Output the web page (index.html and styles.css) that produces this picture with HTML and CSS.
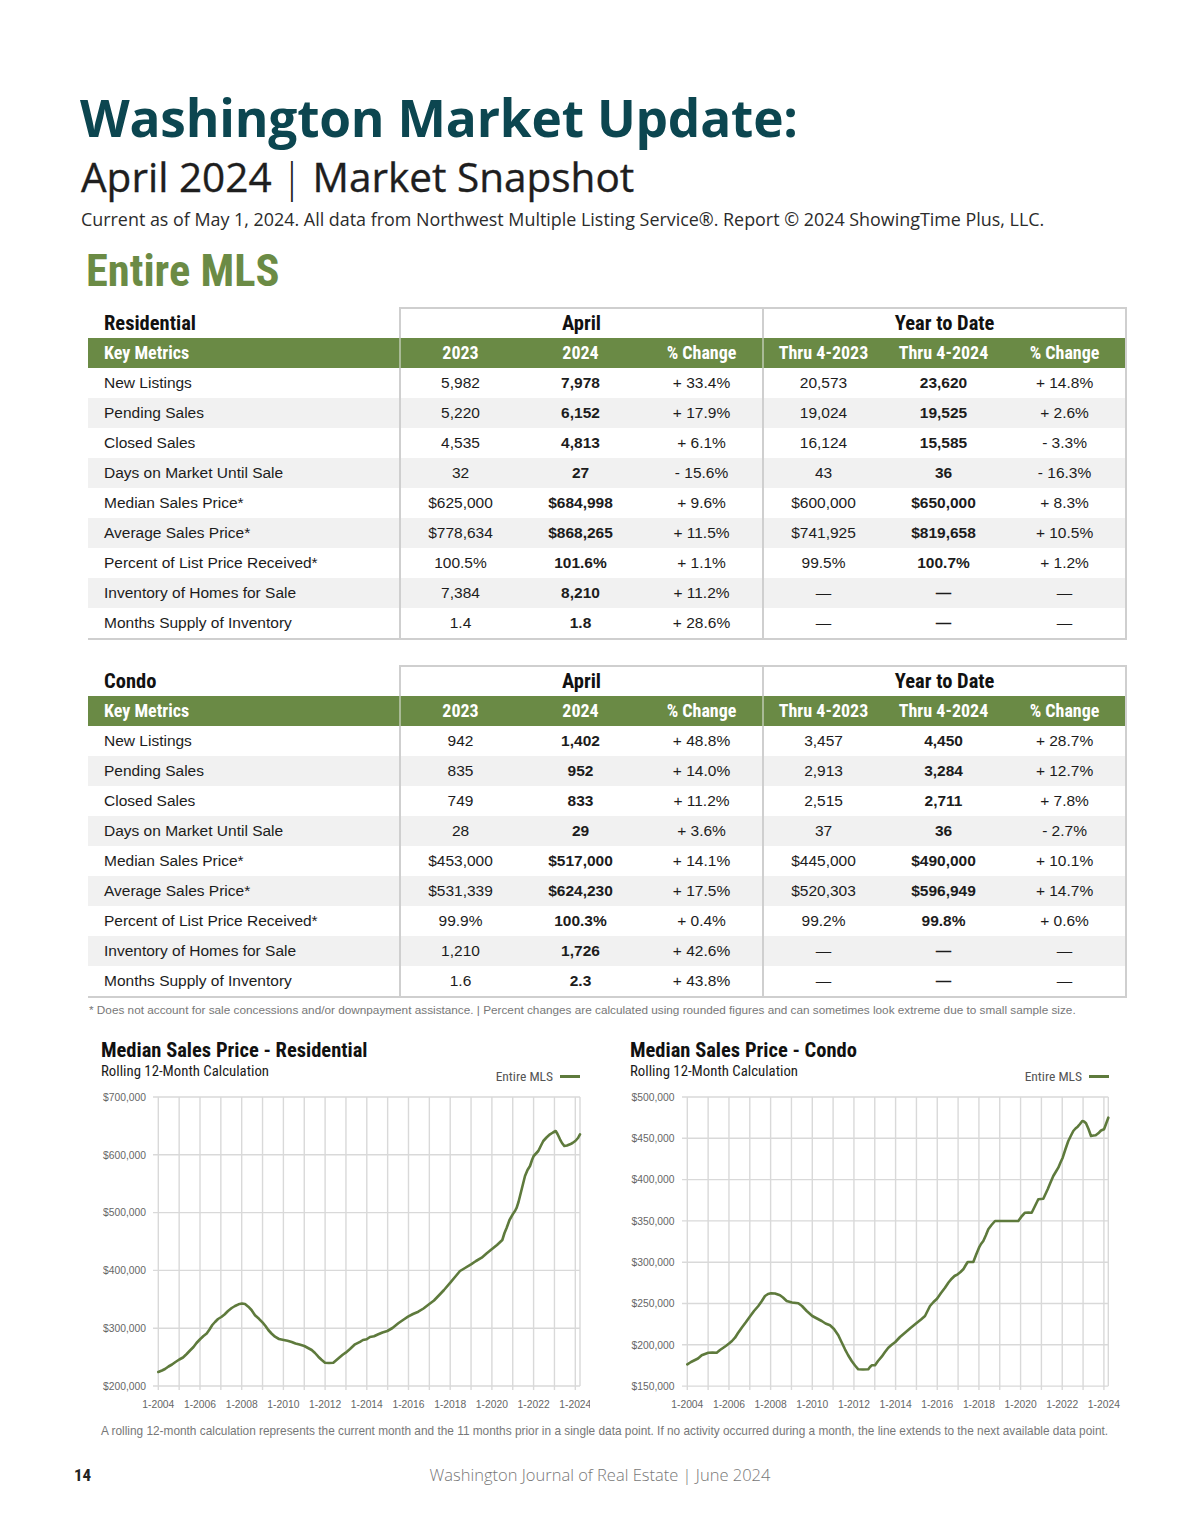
FILE: index.html
```html
<!DOCTYPE html>
<html lang="en">
<head>
<meta charset="utf-8">
<title>Washington Market Update: April 2024</title>
<link rel="stylesheet" href="styles.css">
</head>
<body>
<div class="page">
  <header class="head">
    <h1 class="title">Washington Market Update:</h1>
    <h2 class="subtitle">April 2024 <span class="pipe">|</span> Market Snapshot</h2>
    <p class="current">Current as of May 1, 2024. All data from Northwest Multiple Listing Service®. Report © 2024 ShowingTime Plus, LLC.</p>
  </header>

  <h2 class="section">Entire MLS</h2>

  <table class="metrics">
    <colgroup><col class="c-label"><col class="c-num"><col class="c-num"><col class="c-num"><col class="c-num"><col class="c-num"><col class="c-num"></colgroup>
    <thead>
      <tr class="group">
        <th class="tname">Residential</th>
        <th colspan="3" class="grp">April</th>
        <th colspan="3" class="grp grp-last">Year to Date</th>
      </tr>
      <tr class="hdr">
        <th class="lbl">Key Metrics</th>
        <th class="sep">2023</th><th>2024</th><th>% Change</th>
        <th class="sep">Thru 4-2023</th><th>Thru 4-2024</th><th class="end">% Change</th>
      </tr>
    </thead>
    <tbody>
      <tr><td class="lbl">New Listings</td><td class="sep">5,982</td><td class="b">7,978</td><td>+ 33.4%</td><td class="sep">20,573</td><td class="b">23,620</td><td class="end">+ 14.8%</td></tr>
      <tr><td class="lbl">Pending Sales</td><td class="sep">5,220</td><td class="b">6,152</td><td>+ 17.9%</td><td class="sep">19,024</td><td class="b">19,525</td><td class="end">+ 2.6%</td></tr>
      <tr><td class="lbl">Closed Sales</td><td class="sep">4,535</td><td class="b">4,813</td><td>+ 6.1%</td><td class="sep">16,124</td><td class="b">15,585</td><td class="end">- 3.3%</td></tr>
      <tr><td class="lbl">Days on Market Until Sale</td><td class="sep">32</td><td class="b">27</td><td>- 15.6%</td><td class="sep">43</td><td class="b">36</td><td class="end">- 16.3%</td></tr>
      <tr><td class="lbl">Median Sales Price*</td><td class="sep">$625,000</td><td class="b">$684,998</td><td>+ 9.6%</td><td class="sep">$600,000</td><td class="b">$650,000</td><td class="end">+ 8.3%</td></tr>
      <tr><td class="lbl">Average Sales Price*</td><td class="sep">$778,634</td><td class="b">$868,265</td><td>+ 11.5%</td><td class="sep">$741,925</td><td class="b">$819,658</td><td class="end">+ 10.5%</td></tr>
      <tr><td class="lbl">Percent of List Price Received*</td><td class="sep">100.5%</td><td class="b">101.6%</td><td>+ 1.1%</td><td class="sep">99.5%</td><td class="b">100.7%</td><td class="end">+ 1.2%</td></tr>
      <tr><td class="lbl">Inventory of Homes for Sale</td><td class="sep">7,384</td><td class="b">8,210</td><td>+ 11.2%</td><td class="sep">—</td><td class="b">—</td><td class="end">—</td></tr>
      <tr><td class="lbl">Months Supply of Inventory</td><td class="sep">1.4</td><td class="b">1.8</td><td>+ 28.6%</td><td class="sep">—</td><td class="b">—</td><td class="end">—</td></tr>
    </tbody>
  </table>

  <table class="metrics metrics-2">
    <colgroup><col class="c-label"><col class="c-num"><col class="c-num"><col class="c-num"><col class="c-num"><col class="c-num"><col class="c-num"></colgroup>
    <thead>
      <tr class="group">
        <th class="tname">Condo</th>
        <th colspan="3" class="grp">April</th>
        <th colspan="3" class="grp grp-last">Year to Date</th>
      </tr>
      <tr class="hdr">
        <th class="lbl">Key Metrics</th>
        <th class="sep">2023</th><th>2024</th><th>% Change</th>
        <th class="sep">Thru 4-2023</th><th>Thru 4-2024</th><th class="end">% Change</th>
      </tr>
    </thead>
    <tbody>
      <tr><td class="lbl">New Listings</td><td class="sep">942</td><td class="b">1,402</td><td>+ 48.8%</td><td class="sep">3,457</td><td class="b">4,450</td><td class="end">+ 28.7%</td></tr>
      <tr><td class="lbl">Pending Sales</td><td class="sep">835</td><td class="b">952</td><td>+ 14.0%</td><td class="sep">2,913</td><td class="b">3,284</td><td class="end">+ 12.7%</td></tr>
      <tr><td class="lbl">Closed Sales</td><td class="sep">749</td><td class="b">833</td><td>+ 11.2%</td><td class="sep">2,515</td><td class="b">2,711</td><td class="end">+ 7.8%</td></tr>
      <tr><td class="lbl">Days on Market Until Sale</td><td class="sep">28</td><td class="b">29</td><td>+ 3.6%</td><td class="sep">37</td><td class="b">36</td><td class="end">- 2.7%</td></tr>
      <tr><td class="lbl">Median Sales Price*</td><td class="sep">$453,000</td><td class="b">$517,000</td><td>+ 14.1%</td><td class="sep">$445,000</td><td class="b">$490,000</td><td class="end">+ 10.1%</td></tr>
      <tr><td class="lbl">Average Sales Price*</td><td class="sep">$531,339</td><td class="b">$624,230</td><td>+ 17.5%</td><td class="sep">$520,303</td><td class="b">$596,949</td><td class="end">+ 14.7%</td></tr>
      <tr><td class="lbl">Percent of List Price Received*</td><td class="sep">99.9%</td><td class="b">100.3%</td><td>+ 0.4%</td><td class="sep">99.2%</td><td class="b">99.8%</td><td class="end">+ 0.6%</td></tr>
      <tr><td class="lbl">Inventory of Homes for Sale</td><td class="sep">1,210</td><td class="b">1,726</td><td>+ 42.6%</td><td class="sep">—</td><td class="b">—</td><td class="end">—</td></tr>
      <tr><td class="lbl">Months Supply of Inventory</td><td class="sep">1.6</td><td class="b">2.3</td><td>+ 43.8%</td><td class="sep">—</td><td class="b">—</td><td class="end">—</td></tr>
    </tbody>
  </table>

  <p class="footnote">* Does not account for sale concessions and/or downpayment assistance. | Percent changes are calculated using rounded figures and can sometimes look extreme due to small sample size.</p>

  <section class="charts">
    <figure class="chart chart-left">
      <div class="chart-head">
        <div class="chart-titles">
          <h3 class="chart-title">Median Sales Price - Residential</h3>
          <p class="chart-sub">Rolling 12-Month Calculation</p>
        </div>
        <div class="legend">Entire MLS <span class="legend-line"></span></div>
      </div>
      <svg class="plot" width="495" height="330" viewBox="0 0 495 330">
        <g class="grid">
          <line x1="58" y1="11" x2="485" y2="11"/><line x1="58" y1="68.8" x2="485" y2="68.8"/><line x1="58" y1="126.6" x2="485" y2="126.6"/><line x1="58" y1="184.4" x2="485" y2="184.4"/><line x1="58" y1="242.2" x2="485" y2="242.2"/><line x1="58" y1="300" x2="485" y2="300"/>
          <line x1="63.3" y1="11" x2="63.3" y2="304"/><line x1="84.15" y1="11" x2="84.15" y2="304"/><line x1="105" y1="11" x2="105" y2="304"/><line x1="125.85" y1="11" x2="125.85" y2="304"/><line x1="146.7" y1="11" x2="146.7" y2="304"/><line x1="167.55" y1="11" x2="167.55" y2="304"/><line x1="188.4" y1="11" x2="188.4" y2="304"/><line x1="209.25" y1="11" x2="209.25" y2="304"/><line x1="230.1" y1="11" x2="230.1" y2="304"/><line x1="250.95" y1="11" x2="250.95" y2="304"/><line x1="271.8" y1="11" x2="271.8" y2="304"/><line x1="292.65" y1="11" x2="292.65" y2="304"/><line x1="313.5" y1="11" x2="313.5" y2="304"/><line x1="334.35" y1="11" x2="334.35" y2="304"/><line x1="355.2" y1="11" x2="355.2" y2="304"/><line x1="376.05" y1="11" x2="376.05" y2="304"/><line x1="396.9" y1="11" x2="396.9" y2="304"/><line x1="417.75" y1="11" x2="417.75" y2="304"/><line x1="438.6" y1="11" x2="438.6" y2="304"/><line x1="459.45" y1="11" x2="459.45" y2="304"/><line x1="480.3" y1="11" x2="480.3" y2="304"/><line x1="485" y1="11" x2="485" y2="300"/>
        </g>
        <g class="ylab">
          <text x="51" y="14.7">$700,000</text><text x="51" y="72.5">$600,000</text><text x="51" y="130.3">$500,000</text><text x="51" y="188.1">$400,000</text><text x="51" y="245.9">$300,000</text><text x="51" y="303.7">$200,000</text>
        </g>
        <g class="xlab">
          <text x="63.3" y="322">1-2004</text><text x="105" y="322">1-2006</text><text x="146.7" y="322">1-2008</text><text x="188.4" y="322">1-2010</text><text x="230.1" y="322">1-2012</text><text x="271.8" y="322">1-2014</text><text x="313.5" y="322">1-2016</text><text x="355.2" y="322">1-2018</text><text x="396.9" y="322">1-2020</text><text x="438.6" y="322">1-2022</text><text x="480.3" y="322">1-2024</text>
        </g>
        <polyline class="series" points="63.3,286 67,284.5 70,283 73.5,280.5 77,278.5 80.5,276 84.3,273.5 88,271.5 91.7,268 95,264.5 98.5,261 101.5,257 105.3,253 108.5,250 111.7,247.5 114.5,243.5 117.3,239 120,236 123,233 126.3,231 129.5,228.5 133,225 136.7,222 140,220 143.5,218.3 147,217.5 150,218 153.3,220.7 156.5,224 160,229.3 164,232.8 167.7,236.7 170.5,240 173.3,244 176.5,247.5 180,250.7 184,253 188.7,254 192.5,254.8 196.7,256 200.5,257.5 204.5,258.5 209.3,260 213,262 216.7,264 220,267 223.3,270.7 226.5,273.8 230,276.7 234,277 238.3,276.7 241.5,274 245,271 248,268.5 250.7,266.7 255,263 260,258.3 265,255.8 268,254 271.7,253.3 275,251 279,250.3 283.3,248.3 287.5,246.5 292.3,245 297.5,242 303.3,237.3 308,234 313,230.7 318,228 323.3,225.7 328.5,222.5 334,218.3 339,214.5 343.3,210 349,204 355.3,196.7 360,191 365,185 370,182 376,178.3 381,175 386.7,171.7 391.5,167.5 396.7,163.3 402,159 407.3,154 409.5,147 411.7,141.7 414.5,134 417.7,128.3 420,125 421.7,121.7 423.5,116 425,110 427.5,100 430,90 432.5,84 435,80 437,74 438.7,70 441,67.5 443.3,65 446,59.5 448.3,55 451.5,51.5 455,48.3 458,46.5 460.7,45 462.5,48 465,53.3 467,57 469.3,60 472,59.5 475,58.3 477.5,57 480.3,55 483,52 485,48.3"/>
      </svg>
    </figure>

    <figure class="chart chart-right">
      <div class="chart-head">
        <div class="chart-titles">
          <h3 class="chart-title">Median Sales Price - Condo</h3>
          <p class="chart-sub">Rolling 12-Month Calculation</p>
        </div>
        <div class="legend">Entire MLS <span class="legend-line"></span></div>
      </div>
      <svg class="plot" width="500" height="330" viewBox="0 0 500 330">
        <g class="grid">
          <line x1="57" y1="11" x2="483.3" y2="11"/><line x1="57" y1="52.3" x2="483.3" y2="52.3"/><line x1="57" y1="93.6" x2="483.3" y2="93.6"/><line x1="57" y1="134.9" x2="483.3" y2="134.9"/><line x1="57" y1="176.2" x2="483.3" y2="176.2"/><line x1="57" y1="217.5" x2="483.3" y2="217.5"/><line x1="57" y1="258.8" x2="483.3" y2="258.8"/><line x1="57" y1="300.1" x2="483.3" y2="300.1"/>
          <line x1="62.3" y1="11" x2="62.3" y2="304.1"/><line x1="83.13" y1="11" x2="83.13" y2="304.1"/><line x1="103.96" y1="11" x2="103.96" y2="304.1"/><line x1="124.79" y1="11" x2="124.79" y2="304.1"/><line x1="145.62" y1="11" x2="145.62" y2="304.1"/><line x1="166.45" y1="11" x2="166.45" y2="304.1"/><line x1="187.28" y1="11" x2="187.28" y2="304.1"/><line x1="208.11" y1="11" x2="208.11" y2="304.1"/><line x1="228.94" y1="11" x2="228.94" y2="304.1"/><line x1="249.77" y1="11" x2="249.77" y2="304.1"/><line x1="270.6" y1="11" x2="270.6" y2="304.1"/><line x1="291.43" y1="11" x2="291.43" y2="304.1"/><line x1="312.26" y1="11" x2="312.26" y2="304.1"/><line x1="333.09" y1="11" x2="333.09" y2="304.1"/><line x1="353.92" y1="11" x2="353.92" y2="304.1"/><line x1="374.75" y1="11" x2="374.75" y2="304.1"/><line x1="395.58" y1="11" x2="395.58" y2="304.1"/><line x1="416.41" y1="11" x2="416.41" y2="304.1"/><line x1="437.24" y1="11" x2="437.24" y2="304.1"/><line x1="458.07" y1="11" x2="458.07" y2="304.1"/><line x1="478.9" y1="11" x2="478.9" y2="304.1"/><line x1="483.3" y1="11" x2="483.3" y2="300.1"/>
        </g>
        <g class="ylab">
          <text x="49.5" y="14.7">$500,000</text><text x="49.5" y="56">$450,000</text><text x="49.5" y="97.3">$400,000</text><text x="49.5" y="138.6">$350,000</text><text x="49.5" y="179.9">$300,000</text><text x="49.5" y="221.2">$250,000</text><text x="49.5" y="262.5">$200,000</text><text x="49.5" y="303.8">$150,000</text>
        </g>
        <g class="xlab">
          <text x="62.3" y="322">1-2004</text><text x="103.96" y="322">1-2006</text><text x="145.62" y="322">1-2008</text><text x="187.28" y="322">1-2010</text><text x="228.94" y="322">1-2012</text><text x="270.6" y="322">1-2014</text><text x="312.26" y="322">1-2016</text><text x="353.92" y="322">1-2018</text><text x="395.58" y="322">1-2020</text><text x="437.24" y="322">1-2022</text><text x="478.9" y="322">1-2024</text>
        </g>
        <polyline class="series" points="62.3,278.3 66,276 70,274 73,272.5 76.7,269.3 80,268 83.3,266.7 87.5,266.5 91.7,266.7 95,264 98.3,261.7 101.5,259.5 104.3,257.3 107,255 110,251.7 113,247 116.7,241.7 121,236 125.3,230 129,225 133.3,220 136.5,215.5 140,210 143,208 146,207.3 150,207.5 155,209.3 158,211.5 161.7,215 167,216.5 173.3,217.3 177,220 181.7,225 184.5,227.5 187.3,230 192,232.5 196.7,235 200.5,237.5 205,239.3 209,243 213.3,249.3 216.5,256 220,263.3 223,269 226.7,275 230,279.5 233.3,283.3 238,283.5 243.3,283.3 245,281 246.7,279.3 250,279.3 253,275 256.7,270.7 260,266 263.3,261.7 267,258.5 270.3,256 275,251 280,246.7 285.5,242 291.3,237.3 296,233.5 300,230 302.5,225 305,220 308.5,216 312,212.7 316,207 320,201.7 323.5,196.5 326.7,192.7 329.5,190 332.7,188.3 335.5,186 338.3,183.3 340.5,179.5 342.7,176 345.5,176 348.3,176 351,169 354,161.7 356,158 358.3,155 361,149 363.3,143.3 366.5,139 370,135 380,135 393.3,135 396.5,130.5 400,126.7 403.5,126.5 406.7,126.7 410,120 413.3,113.3 416,113 418.3,112.7 420.5,108 422.7,103.3 425.5,96.5 428.3,90 431,85.5 433.3,81.7 435.5,76.5 437.7,71.7 440.5,63 443.3,55 446,49.5 448.3,45 450.5,42.5 452.7,40.7 455,38 457.3,35 459,35.5 461,37.3 463.5,43 466,50 468.5,49.5 470.7,49.3 473.3,47.3 476,44.5 479,43.3 481,38 483.3,31.7"/>
      </svg>
    </figure>
  </section>

  <p class="caption">A rolling 12-month calculation represents the current month and the 11 months prior in a single data point. If no activity occurred during a month, the line extends to the next available data point.</p>

  <footer class="foot">
    <span class="pageno">14</span>
    <span class="journal">Washington Journal of Real Estate | June 2024</span>
  </footer>
</div>
</body>
</html>
```

FILE: styles.css
```css
* { box-sizing: border-box; }
html, body { margin: 0; padding: 0; background: #ffffff; }
body { font-family: "Liberation Sans", Arial, sans-serif; color: #1c1c1c; }

.page {
  width: 1200px;
  height: 1535px;
  padding-top: 87px;
  position: relative;
}

.head { padding-left: 80px; }
.title {
  margin: 0;
  font-family: "Open Sans", sans-serif;
  font-weight: 700;
  font-size: 51.4px;
  line-height: 60px;
  color: #0c4650;
  letter-spacing: -0.2px;
}
.subtitle {
  margin: 6px 0 0 1px;
  font-family: "Open Sans", sans-serif;
  font-weight: 500;
  font-size: 40.5px;
  line-height: 48px;
  color: #1e1e1e;
  -webkit-text-stroke: 0.35px #1e1e1e;
}
.pipe { font-weight: 300; display: inline-block; margin: 0 -1px; -webkit-text-stroke: 0; }
.current {
  margin: 6px 0 0 1px;
  font-family: "Open Sans", sans-serif;
  font-size: 17.9px;
  line-height: 24px;
  color: #2b2b2b;
}

.section {
  margin: 15px 0 11px 86px;
  font-family: "Roboto Condensed", "Noto Sans", sans-serif;
  font-stretch: condensed;
  font-weight: 700;
  font-size: 44.5px;
  line-height: 50px;
  color: #6b8b45;
}

.metrics {
  margin-left: 88px;
  width: 1039px;
  table-layout: fixed;
  border-collapse: separate;
  border-spacing: 0;
  font-size: 15.5px;
}
.metrics-2 { margin-top: 25px; }
.c-label { width: 311px; }
.c-num { width: 121px; }
.metrics col:last-child { width: 123px; }

.metrics th, .metrics td {
  padding: 0;
  text-align: center;
  white-space: nowrap;
}
.metrics .group th {
  height: 31px;
  border-top: 2px solid #cfcfcf;
  font-family: "Roboto Condensed", "Noto Sans", sans-serif;
  font-stretch: condensed;
  font-weight: 700;
  font-size: 20.5px;
  line-height: 29px;
  color: #111;
}
.metrics .group th.tname {
  border-top-color: transparent;
  text-align: left;
  padding-left: 16px;
}
.metrics .group th.grp { border-left: 2px solid #cfcfcf; }
.metrics .group th.grp-last { border-right: 2px solid #cfcfcf; }

.metrics .hdr th {
  height: 30px;
  background: #6a8a45;
  color: #ffffff;
  font-family: "Roboto Condensed", "Noto Sans", sans-serif;
  font-stretch: condensed;
  font-weight: 700;
  font-size: 18px;
  line-height: 30px;
}
.metrics .lbl { text-align: left; padding-left: 16px; }
.metrics .sep { border-left: 2px solid #cfcfcf; }
.metrics .end { border-right: 2px solid #cfcfcf; }
.metrics .hdr th.sep { border-left-color: #a9ba96; }
.metrics .hdr th.end { border-right-color: #cfcfcf; }

.metrics td {
  height: 30px;
  line-height: 30px;
  color: #1c1c1c;
}
.metrics tbody tr:nth-child(even) td { background: #f1f1f1; }
.metrics td.b { font-weight: 700; }
.metrics tbody tr:last-child td { border-bottom: 2px solid #cfcfcf; }

.footnote {
  margin: 5px 0 0 89px;
  font-size: 11.77px;
  line-height: 14px;
  color: #777;
}

.charts {
  display: flex;
  gap: 35px;
  margin: 22px 0 0 95px;
}
.chart { margin: 0; }
.chart-left { width: 495px; }
.chart-right { width: 500px; }
.chart-head {
  display: flex;
  justify-content: space-between;
  align-items: flex-end;
  padding-left: 6px;
  height: 47px;
}
.chart-right .chart-head { padding-left: 5px; padding-right: 16px; }
.chart-left .chart-head { padding-right: 10px; }
.chart-title {
  margin: 0;
  font-family: "Roboto Condensed", "Noto Sans", sans-serif;
  font-stretch: condensed;
  font-weight: 700;
  font-size: 20.5px;
  line-height: 23px;
  color: #111;
}
.chart-sub {
  margin: 0;
  font-family: "Roboto Condensed", "Noto Sans", sans-serif;
  font-stretch: condensed;
  font-size: 14.8px;
  line-height: 18px;
  color: #1a1a1a;
  padding-bottom: 6px;
}
.legend {
  display: flex;
  align-items: center;
  gap: 7px;
  font-family: "Roboto Condensed", "Noto Sans", sans-serif;
  font-stretch: condensed;
  font-size: 13.5px;
  line-height: 16px;
  color: #555;
  margin-bottom: 2px;
}
.legend-line {
  display: inline-block;
  width: 20px;
  height: 3px;
  background: #5e7a3c;
}
.plot { display: block; }
.grid line { stroke: #d9d9d9; stroke-width: 1.4; }
.ylab text {
  font-family: "Liberation Sans", Arial, sans-serif;
  font-size: 10.3px;
  fill: #666;
  text-anchor: end;
}
.xlab text {
  font-family: "Liberation Sans", Arial, sans-serif;
  font-size: 10.3px;
  fill: #666;
  text-anchor: middle;
}
.series {
  fill: none;
  stroke: #5e7a3c;
  stroke-width: 2.6;
  stroke-linejoin: round;
  stroke-linecap: round;
}

.caption {
  margin: 8px 0 0 101px;
  font-size: 11.85px;
  line-height: 14px;
  color: #777;
}

.foot {
  position: relative;
  margin-top: 27px;
  height: 20px;
  text-align: center;
}
.pageno {
  position: absolute;
  left: 74px;
  top: 0;
  font-family: "Roboto Condensed", "Noto Sans", sans-serif;
  font-stretch: condensed;
  font-weight: 700;
  font-size: 17px;
  line-height: 20px;
  color: #222;
}
.journal {
  font-family: "Open Sans", sans-serif;
  font-weight: 300;
  font-size: 16.5px;
  line-height: 20px;
  color: #777;
}
```
